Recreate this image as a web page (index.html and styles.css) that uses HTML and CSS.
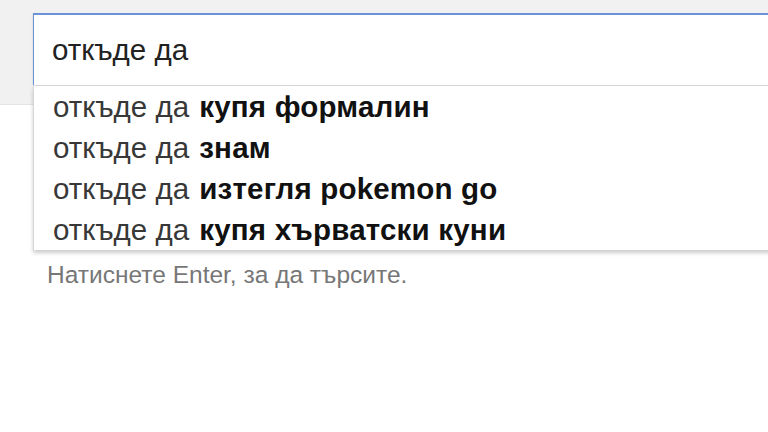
FILE: index.html
```html
<!DOCTYPE html>
<html lang="bg">
<head>
<meta charset="utf-8">
<link rel="stylesheet" href="styles.css">
</head>
<body>
<header class="top">
  <div class="search">
    <div class="box"><span class="query">откъде да</span></div>
    <ul class="suggest">
      <li>откъде да <b>купя формалин</b></li>
      <li>откъде да <b>знам</b></li>
      <li>откъде да <b>изтегля pokemon go</b></li>
      <li>откъде да <b>купя хърватски куни</b></li>
    </ul>
  </div>
</header>
<p class="hint">Натиснете Enter, за да търсите.</p>
</body>
</html>
```
FILE: styles.css
```css
html, body {
  margin: 0;
  padding: 0;
  background: #fff;
  overflow: hidden;
}
body {
  width: 768px;
  height: 432px;
  font-family: "Liberation Sans", Arial, sans-serif;
}
.top {
  height: 105px;
  background: #f1f1f1;
  border-bottom: 1px solid #e3e3e3;
  padding: 13px 0 0 33px;
  box-sizing: border-box;
}
.search {
  position: relative;
  width: 760px;
}
.box {
  height: 72px;
  box-sizing: border-box;
  background: #fff;
  border-top: 2px solid #6a93d8;
  border-left: 1px solid #6a93d8;
  padding: 0 0 0 18px;
  display: flex;
  align-items: center;
  box-shadow: 0 1px 2px rgba(0,0,0,0.15);
}
.query {
  font-size: 29.5px;
  color: #222;
  margin-top: -1px;
}
.suggest {
  position: absolute;
  left: 0;
  top: 73px;
  width: 760px;
  margin: 0;
  padding: 0;
  list-style: none;
  background: #fff;
  border-left: 1px solid #d6d6d6;
  box-shadow: 0 3px 4px rgba(0,0,0,0.2);
}
.suggest li {
  height: 41px;
  line-height: 41px;
  padding-left: 19px;
  font-size: 29.5px;
  color: #383838;
}
.suggest b {
  color: #111;
  font-weight: bold;
  margin-left: 2px;
  letter-spacing: 0.2px;
}
.hint {
  margin: 156px 0 0 47px;
  font-size: 24.5px;
  color: #777;
}
```
